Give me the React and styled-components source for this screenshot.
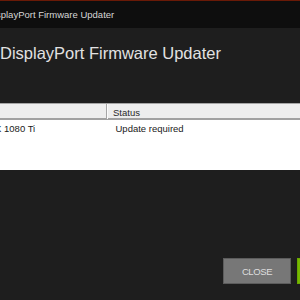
import React from 'react'
import styled, { createGlobalStyle } from 'styled-components'

const GlobalStyle = createGlobalStyle`
  html, body {
    margin: 0;
    padding: 0;
    background: #1e1e1e;
    overflow: hidden;
  }
  body {
    font-family: 'Liberation Sans', Arial, sans-serif;
  }
`

// the screenshot is a crop, so the window starts off to the left
const Window = styled.div`
  width: 485px;
  height: 300px;
  margin-left: -100px;
  background: #1e1e1e;
  display: flex;
  flex-direction: column;
`

const TitleBar = styled.div`
  height: 27px;
  border-top: 1px solid #6a1a07;
  background: #0e0e0e;
  color: #d6d6d6;
  font-size: 9.5px;
  display: flex;
  align-items: center;
  padding-left: 87px;
`

const Heading = styled.h1`
  margin: 16px 0 0;
  padding-left: 100px;
  font-size: 16.5px;
  line-height: 19px;
  font-weight: normal;
  color: #e2e2e2;
`

const Table = styled.div`
  margin-top: 40px;
  background: #ffffff;
  font-size: 9.5px;
  color: #1a1a1a;
`

const Row = styled.div`
  display: grid;
  grid-template-columns: 207px 1fr;
  background: ${p => (p.$header ? '#ededed' : '#ffffff')};
  border-top: ${p => (p.$header ? '1px solid #a5a5a5' : 'none')};
  border-bottom: ${p => (p.$header ? '2px solid #a0a0a0' : 'none')};
  height: ${p => (p.$header ? '14px' : '16px')};
`

const Cell = styled.div`
  padding: ${p => (p.$header ? '3px 6px 0' : '3px 6px 0 8.5px')};
  line-height: 12px;
  white-space: nowrap;
  border-right: ${p => (p.$divider ? '1px solid #a5a5a5' : 'none')};
  box-shadow: ${p => (p.$divider ? '1px 0 0 #fafafa' : 'none')};
  color: ${p => (p.$header ? '#2a2a2a' : '#1a1a1a')};
`

const TableBody = styled.div`
  min-height: 50px;
`

const Spacer = styled.div`
  flex: 1;
`

const ButtonRow = styled.div`
  display: flex;
  justify-content: flex-end;
  gap: 6px;
  padding: 0 20px 16px 0;
`

const Button = styled.button`
  width: 68px;
  height: 26px;
  border: 1px solid ${p => (p.$primary ? '#6aa600' : '#5c5c5c')};
  background: ${p => (p.$primary ? '#76b900' : '#777777')};
  color: ${p => (p.$primary ? '#ffffff' : '#dedede')};
  font-family: 'Liberation Sans', Arial, sans-serif;
  font-size: 9.5px;
  letter-spacing: -0.4px;
  padding: 0;
  cursor: pointer;
`

export default function App () {
  const devices = [
    { name: 'NVIDIA GeForce GTX 1080 Ti', status: 'Update required' }
  ]

  return (
    <>
      <GlobalStyle />
      <Window>
        <TitleBar>DisplayPort Firmware Updater</TitleBar>
        <Heading>DisplayPort Firmware Updater</Heading>
        <Table>
          <Row $header>
            <Cell $header $divider>Device</Cell>
            <Cell $header>Status</Cell>
          </Row>
          <TableBody>
            {devices.map((d) => (
              <Row key={d.name}>
                <Cell>{d.name}</Cell>
                <Cell>{d.status}</Cell>
              </Row>
            ))}
          </TableBody>
        </Table>
        <Spacer />
        <ButtonRow>
          <Button>CLOSE</Button>
          <Button $primary>UPDATE</Button>
        </ButtonRow>
      </Window>
    </>
  )
}
